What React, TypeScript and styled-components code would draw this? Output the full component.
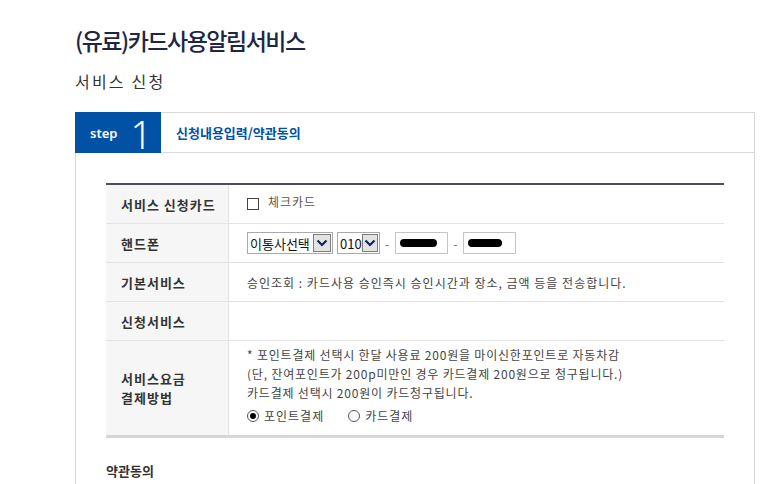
import React from 'react';
import styled, {createGlobalStyle} from 'styled-components';

const GlobalStyle = createGlobalStyle`
  body {
    margin: 0;
    background: #fff;
    font-family: "Noto Sans CJK KR", "Noto Sans", sans-serif;
    color: #333;
  }
`;

const Page = styled.div`
  width: 680px;
  padding: 22px 0 0 75px;
`;

const Title = styled.h1`
  margin: 0;
  font-size: 23px;
  font-weight: 500;
  line-height: 36px;
  letter-spacing: -1.5px;
  color: #1d2743;
`;

const SubTitle = styled.h2`
  margin: 12px 0 0;
  font-size: 16px;
  font-weight: 400;
  line-height: 22px;
  letter-spacing: 2.2px;
  color: #333;
`;

const Panel = styled.section`
  margin-top: 20px;
  border: 1px solid #d9d9d9;
  border-bottom: none;
  padding-bottom: 60px;
`;

const StepHeader = styled.div`
  display: flex;
  align-items: center;
  height: 39px;
  border-bottom: 1px solid #d9d9d9;
`;

const StepBadge = styled.div`
  display: flex;
  align-items: center;
  gap: 13px;
  box-sizing: border-box;
  width: 86px;
  height: 41px;
  margin: -1px 0 -1px -1px;
  padding-left: 15px;
  background: #0152a5;
  color: #fff;
`;

const StepWord = styled.span`
  font-family: "Noto Sans", sans-serif;
  font-size: 13px;
  font-weight: 600;
`;

const StepNum = styled.span`
  font-family: "Noto Sans", sans-serif;
  font-size: 38px;
  font-weight: 300;
  line-height: 1;
  margin-top: 2px;
`;

const StepTitle = styled.span`
  margin-left: 15px;
  font-size: 13px;
  font-weight: 700;
  color: #0152a5;
`;

const Body = styled.div`
  padding: 30px 30px 0;
`;

const FormTable = styled.div`
  display: grid;
  grid-template-columns: 123px 1fr;
  border-top: 2px solid #4c4e5c;
  border-bottom: 3px solid #d6d6d6;
`;

const Th = styled.div<{$last?: boolean}>`
  display: flex;
  align-items: center;
  min-height: 38px;
  padding-left: 15px;
  background: #f6f6f6;
  border-right: 1px solid #e3e3e3;
  border-bottom: ${p => (p.$last ? 'none' : '1px solid #e3e3e3')};
  font-size: 13px;
  font-weight: 700;
  line-height: 19px;
  letter-spacing: 1px;
  color: #333;
`;

const Td = styled.div<{$last?: boolean}>`
  display: flex;
  align-items: center;
  gap: 4px;
  padding: 0 18px;
  border-bottom: ${p => (p.$last ? 'none' : '1px solid #e3e3e3')};
  font-size: 12px;
  letter-spacing: 1px;
  color: #444;
`;

const TdStack = styled(Td)`
  flex-direction: column;
  align-items: flex-start;
  gap: 0;
  padding-top: 4px;
  padding-bottom: 10px;
  line-height: 19px;
  letter-spacing: 0.8px;
`;

const CheckBox = styled.span`
  display: inline-block;
  width: 12px;
  height: 12px;
  box-sizing: border-box;
  border: 1px solid #444;
  background: #fff;
`;

const CheckLabel = styled.span`
  margin-left: 5px;
  margin-top: -6px;
  color: #555;
`;

const SelectBox = styled.div<{$w: number}>`
  display: inline-flex;
  align-items: center;
  box-sizing: border-box;
  width: ${p => p.$w}px;
  height: 22px;
  padding: 0 1px 0 2px;
  border: 1px solid #a9a9a9;
  font-size: 13px;
  letter-spacing: 0;
  color: #111;
`;

const SelectArrow = styled.span`
  display: flex;
  align-items: center;
  justify-content: center;
  margin-left: auto;
  box-sizing: border-box;
  width: 18px;
  height: 18px;
  border: 1px solid #7d7d7d;
  background: #e3e3e3;
`;

const Dash = styled.span`
  margin: 0 1px;
  color: #666;
`;

const TextInput = styled.div`
  display: inline-flex;
  align-items: center;
  box-sizing: border-box;
  width: 53px;
  height: 22px;
  padding-left: 4px;
  border: 1px solid #c4c4c4;
`;

const Mask = styled.span<{$w: number}>`
  display: inline-block;
  width: ${p => p.$w}px;
  height: 8px;
  border-radius: 4px;
  background: #000;
`;

const RadioRow = styled.div`
  display: flex;
  align-items: center;
  margin-top: 4px;
  letter-spacing: 1px;
`;

const Radio = styled.span<{$checked?: boolean}>`
  display: inline-flex;
  align-items: center;
  justify-content: center;
  width: 12px;
  height: 12px;
  box-sizing: border-box;
  border: 1px solid #555;
  border-radius: 50%;
  background: #fff;
  &::after {
    content: '';
    display: ${p => (p.$checked ? 'block' : 'none')};
    width: 6px;
    height: 6px;
    border-radius: 50%;
    background: #000;
  }
`;

const RadioLabel = styled.span`
  margin: 0 24px 0 5px;
  color: #444;
`;

const Agree = styled.h3`
  margin: 23px 0 0;
  font-size: 13px;
  font-weight: 700;
  color: #333;
`;

const Chevron = () => (
  <svg width="12" height="8" viewBox="0 0 12 8">
    <path d="M1.5 1.5 L6 6 L10.5 1.5" fill="none" stroke="#17245e" strokeWidth="2.2" />
  </svg>
);

const Select = ({label, width}: {label: string; width: number}) => (
  <SelectBox $w={width}>
    {label}
    <SelectArrow>
      <Chevron />
    </SelectArrow>
  </SelectBox>
);

const App = () => {
  return (
    <>
      <GlobalStyle />
      <Page>
        <Title>(유료)카드사용알림서비스</Title>
        <SubTitle>서비스 신청</SubTitle>
        <Panel>
          <StepHeader>
            <StepBadge>
              <StepWord>step</StepWord>
              <StepNum>1</StepNum>
            </StepBadge>
            <StepTitle>신청내용입력/약관동의</StepTitle>
          </StepHeader>
          <Body>
            <FormTable>
              <Th>서비스 신청카드</Th>
              <Td>
                <CheckBox />
                <CheckLabel>체크카드</CheckLabel>
              </Td>

              <Th>핸드폰</Th>
              <Td>
                <Select label="이통사선택" width={86} />
                <Select label="010" width={43} />
                <Dash>-</Dash>
                <TextInput>
                  <Mask $w={37} />
                </TextInput>
                <Dash>-</Dash>
                <TextInput>
                  <Mask $w={34} />
                </TextInput>
              </Td>

              <Th>기본서비스</Th>
              <Td>승인조회 : 카드사용 승인즉시 승인시간과 장소, 금액 등을 전송합니다.</Td>

              <Th>신청서비스</Th>
              <Td />

              <Th $last>
                서비스요금
                <br />
                결제방법
              </Th>
              <TdStack $last>
                <span>* 포인트결제 선택시 한달 사용료 200원을 마이신한포인트로 자동차감</span>
                <span>(단, 잔여포인트가 200p미만인 경우 카드결제 200원으로 청구됩니다.)</span>
                <span>카드결제 선택시 200원이 카드청구됩니다.</span>
                <RadioRow>
                  <Radio $checked />
                  <RadioLabel>포인트결제</RadioLabel>
                  <Radio />
                  <RadioLabel>카드결제</RadioLabel>
                </RadioRow>
              </TdStack>
            </FormTable>
            <Agree>약관동의</Agree>
          </Body>
        </Panel>
      </Page>
    </>
  );
};

export default App;
